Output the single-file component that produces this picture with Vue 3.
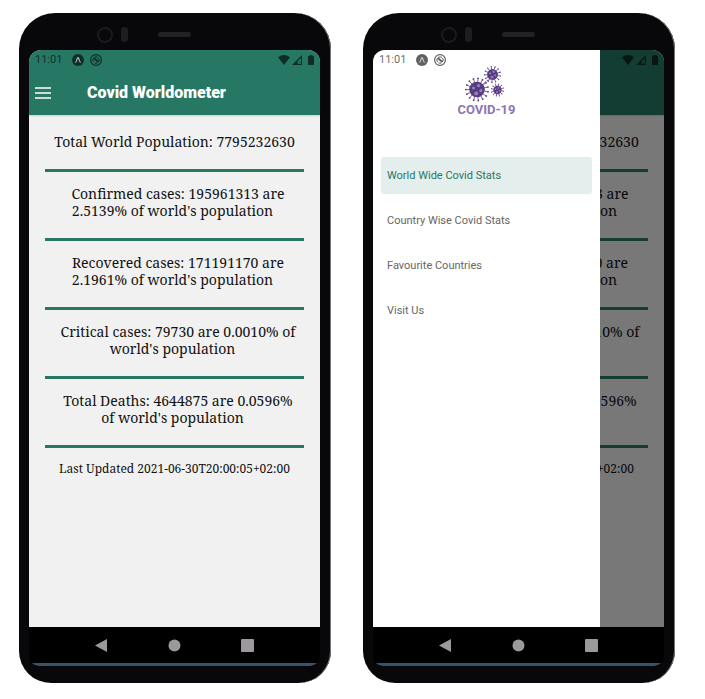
<script setup>
const stats = [
  "Confirmed cases: 195961313 are 2.5139% of world's population",
  "Recovered cases: 171191170 are 2.1961% of world's population",
  "Critical cases: 79730 are 0.0010% of world's population",
  "Total Deaths: 4644875 are 0.0596% of world's population",
]

const links = ['World Wide Covid Stats', 'Country Wise Covid Stats', 'Favourite Countries', 'Visit Us']

const phones = [
  { id: 'home', drawer: false },
  { id: 'menu', drawer: true },
]

function spikes(cx, cy, inner, outer, count) {
  return Array.from({ length: count }, (_, i) => {
    const a = (i / count) * Math.PI * 2 + 0.2
    return {
      x1: cx + Math.cos(a) * inner,
      y1: cy + Math.sin(a) * inner,
      x2: cx + Math.cos(a) * outer,
      y2: cy + Math.sin(a) * outer,
    }
  })
}

const viruses = [
  { cx: 12, cy: 24.5, r: 7.8, knob: 0.9, spikes: spikes(12, 24.5, 7, 11.2, 15) },
  { cx: 27.5, cy: 9.5, r: 5.4, knob: 0.7, spikes: spikes(27.5, 9.5, 5, 8, 13) },
  { cx: 32.5, cy: 25, r: 4.2, knob: 0.5, spikes: spikes(32.5, 25, 4, 6.2, 12) },
]
</script>

<template>
  <main class="page">
    <section v-for="phone in phones" :key="phone.id" class="phone">
      <div class="bezel">
        <div class="sensors">
          <span class="camera"></span>
          <span class="sensor"></span>
        </div>
        <span class="speaker"></span>
      </div>

      <div class="screen">
        <div class="view">
          <div class="status">
            <span class="time">11:01</span>
            <svg class="badge" viewBox="0 0 12 12">
              <circle cx="6" cy="6" r="6" fill="currentColor" />
              <path class="badge-mark" d="M3.6 8.6C4.6 7.4 5 5.4 5.4 3.8Q6 2.8 6.6 3.8C7 5.4 7.4 7.4 8.4 8.6" />
            </svg>
            <svg class="badge" viewBox="0 0 12 12" fill="none" stroke="currentColor">
              <circle cx="6" cy="6" r="5.4" stroke-width="1.2" />
              <path d="M3.5 8A3.2 3.2 0 0 1 3.6 3.9M8.5 4A3.2 3.2 0 0 1 8.4 8.1M4 3.4Q6 2.2 8 3.4M4.5 8.9Q6 9.6 7.5 8.9" />
              <path d="M4 4.2L8.2 7.8" stroke-width="2" />
            </svg>
            <span class="spacer"></span>
            <svg class="wifi" viewBox="0 0 12 10"><path d="M0 2.2Q6 -2 12 2.2L6 10Z" fill="currentColor" /></svg>
            <svg class="signal" viewBox="0 0 10 10">
              <path d="M0 10L10 0V10Z M5.6 9V6.2L9 3V9Z" fill="currentColor" fill-rule="evenodd" />
              <path d="M6.5 9V7L8.2 5.4V9Z" fill="currentColor" opacity=".35" />
            </svg>
            <svg class="battery" viewBox="0 0 6 10"><path d="M0 1H1.5V0H4.5V1H6V10H0Z" fill="currentColor" /></svg>
          </div>

          <header class="appbar">
            <button class="menu" type="button" aria-label="Open menu">
              <svg viewBox="0 0 16 12"><path d="M0 1H16M0 6H16M0 11H16" stroke="#fff" stroke-width="1.5" /></svg>
            </button>
            <h1>Covid Worldometer</h1>
          </header>

          <div class="content">
            <p class="total">Total World Population: 7795232630</p>
            <p v-for="stat in stats" :key="stat" class="stat">{{ stat }}</p>
            <p class="updated">Last Updated 2021-06-30T20:00:05+02:00</p>
          </div>

          <div v-if="phone.drawer" class="overlay">
            <aside class="drawer">
              <div class="logo">
                <svg viewBox="0 0 42 38">
                  <path d="M17 20L24 14" stroke="#5b4083" stroke-dasharray="2 1" />
                  <g v-for="v in viruses" :key="v.cx">
                    <g v-for="(s, i) in v.spikes" :key="i">
                      <line :x1="s.x1" :y1="s.y1" :x2="s.x2" :y2="s.y2" stroke="#5b4083" stroke-width=".8" />
                      <circle :cx="s.x2" :cy="s.y2" :r="v.knob" fill="#5b4083" />
                    </g>
                    <circle :cx="v.cx" :cy="v.cy" :r="v.r" fill="#563b7e" />
                    <g fill="#967dc0">
                      <circle :cx="v.cx - v.r * 0.45" :cy="v.cy - v.r * 0.2" :r="v.r * 0.2" />
                      <circle :cx="v.cx + v.r * 0.2" :cy="v.cy - v.r * 0.5" :r="v.r * 0.22" />
                      <circle :cx="v.cx + v.r * 0.5" :cy="v.cy + v.r * 0.15" :r="v.r * 0.2" />
                      <circle :cx="v.cx - v.r * 0.1" :cy="v.cy + v.r * 0.5" :r="v.r * 0.25" />
                    </g>
                  </g>
                </svg>
                <span>COVID-19</span>
              </div>
              <nav class="links">
                <a v-for="(link, i) in links" :key="link" href="#" :class="{ active: i === 0 }">{{ link }}</a>
              </nav>
            </aside>
          </div>
        </div>

        <div class="softkeys">
          <button type="button" aria-label="Back"><svg viewBox="0 0 13 13"><path d="M12 0V13L0 6.5Z" /></svg></button>
          <button type="button" aria-label="Home"><svg viewBox="0 0 13 13"><circle cx="6.5" cy="6.5" r="6" /></svg></button>
          <button type="button" aria-label="Recent apps"><svg viewBox="0 0 13 13"><rect width="13" height="13" rx="1" /></svg></button>
        </div>
        <div class="edge"></div>
      </div>
    </section>
  </main>
</template>

<style>
body {
  background: #fff;
}
</style>

<style scoped>
.page {
  box-sizing: border-box;
  min-height: 100vh;
  display: grid;
  grid-template-columns: 1fr 1fr;
  gap: 32px;
  padding: 13px 30px 16px 19px;
  font-family: Roboto, "Liberation Sans", sans-serif;
}

.phone {
  display: flex;
  flex-direction: column;
  padding: 0 11px 17px 10px;
  background: #08080a;
  border-radius: 36px 36px 32px 32px;
  box-shadow: inset -1px 0 0 #777;
}

.bezel {
  box-sizing: border-box;
  height: 37px;
  padding-top: 6px;
  display: grid;
  grid-template-columns: 1fr 33px 1fr;
  column-gap: 30px;
  align-items: center;
}

.sensors {
  display: flex;
  justify-content: flex-end;
  align-items: center;
  gap: 8px;
}

.camera {
  box-sizing: border-box;
  width: 16px;
  height: 16px;
  border: 2px solid #1b1b1c;
  border-radius: 50%;
}

.sensor {
  width: 7px;
  height: 15px;
  border-radius: 4px;
  background: #1e1e1e;
}

.speaker {
  height: 5px;
  border-radius: 3px;
  background: #222;
}

.screen {
  flex: 1;
  display: flex;
  flex-direction: column;
  overflow: hidden;
  border-radius: 12px 12px 10px 10px;
  background: #000;
}

.view {
  position: relative;
  flex: 1;
  display: flex;
  flex-direction: column;
  background: #f1f1f1;
}

.status {
  position: relative;
  z-index: 2;
  height: 20px;
  padding: 0 6px;
  display: flex;
  align-items: center;
  color: rgba(0, 0, 0, 0.62);
}

.time {
  font-size: 11px;
  line-height: 20px;
  margin-right: 10px;
}

.badge {
  width: 12px;
  height: 12px;
  margin-right: 6px;
}

.badge-mark {
  fill: none;
  stroke: rgba(255, 255, 255, 0.8);
  stroke-width: 1;
}

.spacer {
  flex: 1;
}

.wifi {
  width: 12px;
  height: 10px;
  margin-right: 2px;
}

.signal {
  width: 10px;
  height: 10px;
  margin-right: 6px;
}

.battery {
  width: 6px;
  height: 10px;
}

.appbar {
  height: 45px;
  margin-top: -20px;
  padding: 20px 6px 0;
  display: flex;
  align-items: center;
  gap: 36px;
  background: #267864;
  box-shadow: 0 1px 2px rgba(0, 0, 0, 0.15);
}

.menu {
  padding: 0;
  border: 0;
  background: none;
  display: flex;
}

.menu svg {
  width: 16px;
  height: 12px;
}

h1 {
  margin: 0;
  font-size: 16px;
  line-height: 20px;
  font-weight: 900;
  color: #fff;
}

.content {
  flex: 1;
  padding: 0 16px;
  font-family: "Noto Serif", "DejaVu Serif Condensed", "Liberation Serif", serif;
  font-size: 14px;
  line-height: 17px;
  color: #111;
  text-align: center;
}

.content p {
  margin: 0;
}

.content .total {
  margin: 0 -16px;
  padding: 18px 0 19px;
}

.stat {
  padding: 13px 4px 19px 0;
  border-top: 3px solid #267864;
  text-indent: 11px;
}

.content .updated {
  padding: 12px 0;
  border-top: 3px solid #267864;
  font-size: 12px;
}

.overlay {
  position: absolute;
  inset: 0;
  z-index: 1;
  background: rgba(0, 0, 0, 0.5);
}

.drawer {
  box-sizing: border-box;
  width: 78%;
  height: 100%;
  padding: 15px 8px;
  background: #fff;
}

.logo {
  display: flex;
  flex-direction: column;
  align-items: center;
  color: #8d75b6;
  font-size: 13px;
  font-weight: 700;
  line-height: 14px;
}

.logo svg {
  width: 42px;
  height: 38px;
}

.links {
  margin-top: 40px;
  display: flex;
  flex-direction: column;
  gap: 8px;
}

.links a {
  padding: 0 6px;
  border-radius: 3px;
  font-size: 11px;
  line-height: 37px;
  color: #666;
  text-decoration: none;
}

.links .active {
  background: #e4eeec;
  color: #267864;
}

.softkeys {
  height: 36px;
  display: flex;
  align-items: center;
  justify-content: center;
  gap: 60px;
}

.softkeys button {
  padding: 0;
  border: 0;
  background: none;
  display: flex;
}

.softkeys svg {
  width: 13px;
  height: 13px;
  fill: #9b999b;
}

.edge {
  height: 3px;
  background: #36536b;
}
</style>
